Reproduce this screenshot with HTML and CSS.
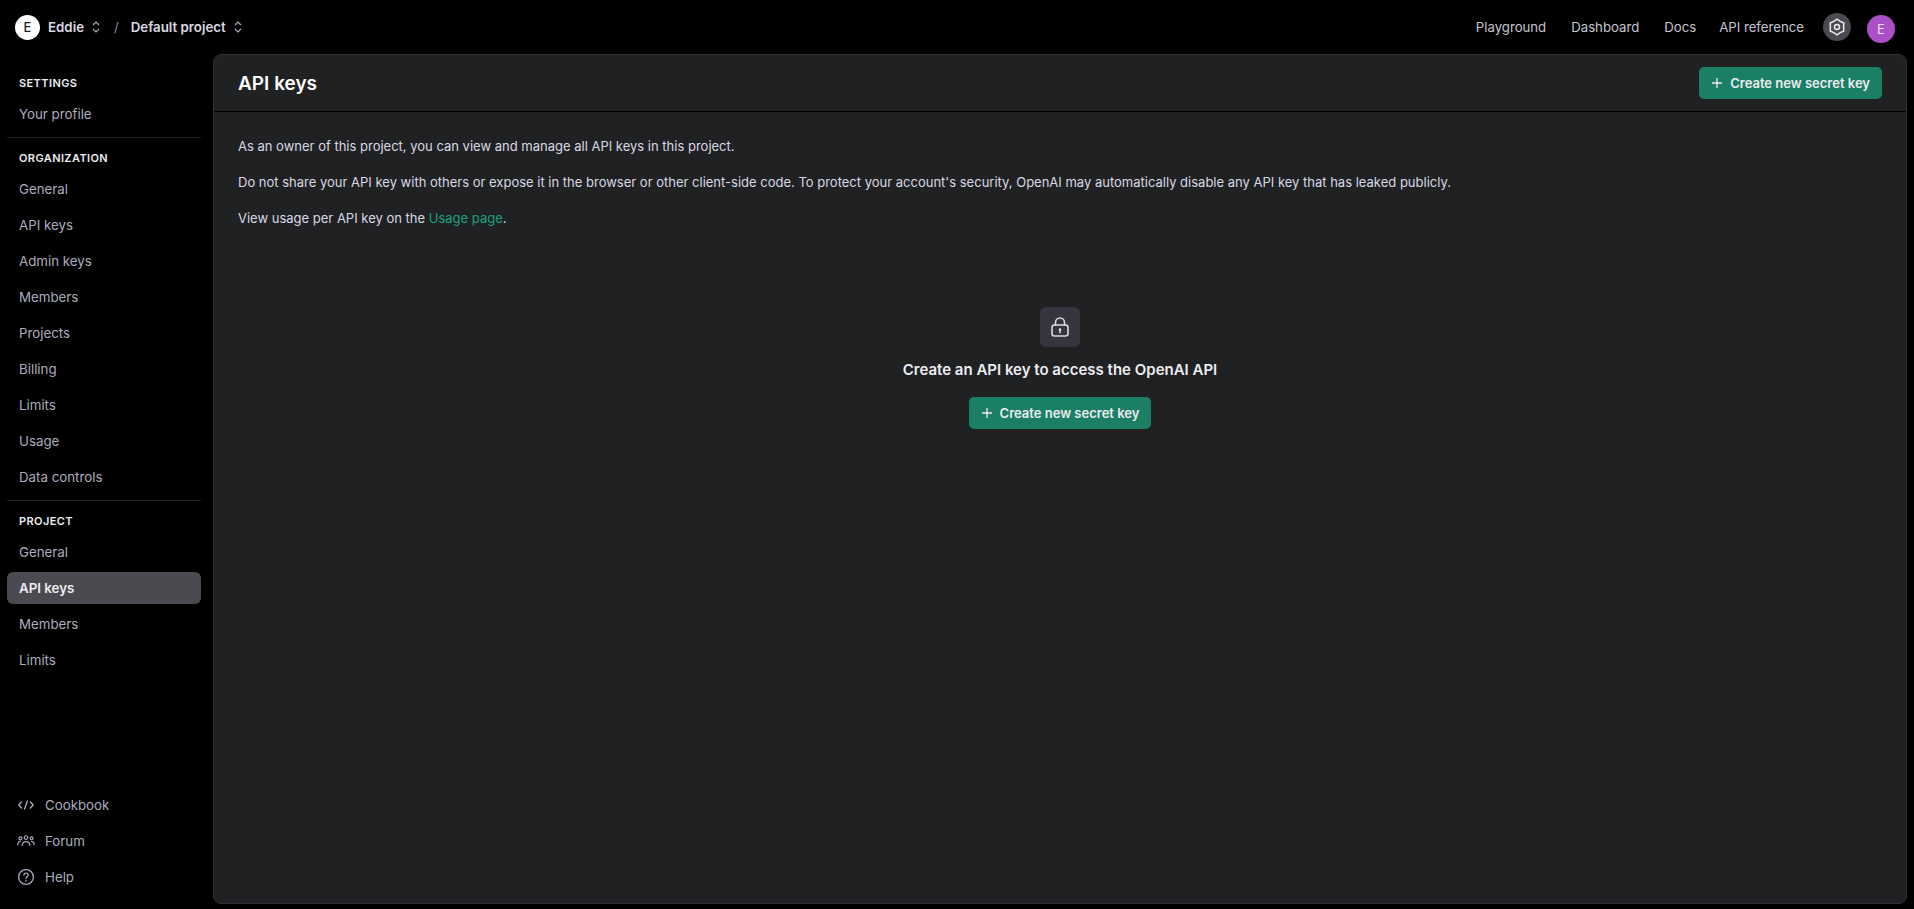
FILE: index.html
```html
<!DOCTYPE html>
<html lang="en">

<head>
  <meta charset="UTF-8">
  <title>API keys</title>
  <link rel="stylesheet" href="styles.css">
</head>

<body>
  <header class="topbar">
    <div class="crumbs">
      <div class="org-avatar">E</div>
      <span class="crumb">Eddie</span>
      <svg class="updown" viewBox="0 0 10 16" width="10" height="16"><path d="M2 6 5 3l3 3M2 10l3 3 3-3" /></svg>
      <span class="slash">/</span>
      <span class="crumb">Default project</span>
      <svg class="updown" viewBox="0 0 10 16" width="10" height="16"><path d="M2 6 5 3l3 3M2 10l3 3 3-3" /></svg>
    </div>
    <nav class="toplinks">
      <a class="toplink">Playground</a>
      <a class="toplink">Dashboard</a>
      <a class="toplink docs">Docs</a>
      <a class="toplink">API reference</a>
      <div class="gear">
        <svg viewBox="0 0 20 20" width="20" height="20"><path d="M10 2.200 13.300 4.300 16.800 6 16.600 10 16.800 14 13.300 15.700 10 17.800 6.700 15.700 3.200 14 3.400 10 3.200 6 6.700 4.300z" /><circle cx="10" cy="10" r="2.500" /></svg>
      </div>
      <div class="user-avatar">E</div>
    </nav>
  </header>

  <div class="layout">
    <aside class="sidebar">
      <div class="side-main">
        <section class="side-group">
          <h4>Settings</h4>
          <a class="side-link">Your profile</a>
        </section>
        <section class="side-group">
          <h4>Organization</h4>
          <a class="side-link">General</a>
          <a class="side-link">API keys</a>
          <a class="side-link">Admin keys</a>
          <a class="side-link">Members</a>
          <a class="side-link">Projects</a>
          <a class="side-link">Billing</a>
          <a class="side-link">Limits</a>
          <a class="side-link">Usage</a>
          <a class="side-link">Data controls</a>
        </section>
        <section class="side-group">
          <h4>Project</h4>
          <a class="side-link">General</a>
          <a class="side-link active">API keys</a>
          <a class="side-link">Members</a>
          <a class="side-link">Limits</a>
        </section>
      </div>
      <div class="side-foot">
        <a class="side-link">
          <svg viewBox="0 0 18 18" width="18" height="18"><path d="M4.500 6 1.800 9l2.700 3M13.500 6l2.700 3-2.700 3M10.400 5 7.600 13" /></svg>
          Cookbook
        </a>
        <a class="side-link">
          <svg viewBox="0 0 20 18" width="20" height="18"><circle cx="10" cy="5.200" r="2" /><circle cx="3.800" cy="6" r="1.600" /><circle cx="16.200" cy="6" r="1.600" /><path d="M5.600 14c.4-2.800 2.200-4.400 4.400-4.400s4 1.600 4.400 4.400M.8 13c.2-2.200 1.300-3.600 3.200-3.700M19.200 13c-.2-2.200-1.300-3.600-3.200-3.700" /></svg>
          Forum
        </a>
        <a class="side-link">
          <svg viewBox="0 0 18 18" width="18" height="18"><circle cx="9" cy="9" r="7.400" /><path d="M6.900 7.200C7 5.900 7.900 5.200 9 5.200c1.200 0 2.100.8 2.100 1.900 0 1.600-2.100 1.700-2.100 3.300M9 12.400v.6" /></svg>
          Help
        </a>
      </div>
    </aside>

    <main class="panel">
      <div class="panel-head">
        <h1>API keys</h1>
        <button class="btn-green">
          <svg viewBox="0 0 12 12" width="12" height="12"><path d="M6 1v10M1 6h10" /></svg>
          Create new secret key
        </button>
      </div>
      <div class="panel-body">
        <p>As an owner of this project, you can view and manage all API keys in this project.</p>
        <p>Do not share your API key with others or expose it in the browser or other client-side code. To protect your account's security, OpenAI may automatically disable any API key that has leaked publicly.</p>
        <p>View usage per API key on the <a class="green-link">Usage page</a>.</p>

        <div class="empty">
          <div class="lock-box">
            <svg viewBox="0 0 20 20" width="20" height="20"><rect x="2" y="8" width="16" height="11" rx="2.400" /><path d="M5.500 8V5.500C5.500 3 7.500 1 10 1s4.500 2 4.500 4.500V8M10 12.600v3" /><circle class="dot" cx="10" cy="12.600" r="1.300" /></svg>
          </div>
          <h3>Create an API key to access the OpenAI API</h3>
          <button class="btn-green">
            <svg viewBox="0 0 12 12" width="12" height="12"><path d="M6 1v10M1 6h10" /></svg>
            Create new secret key
          </button>
        </div>
      </div>
    </main>
  </div>
</body>

</html>
```

FILE: styles.css
```css
* {
  box-sizing: border-box;
}

html,
body {
  height: 100%;
}

body {
  margin: 0;
  background: #000;
  color: #ececf1;
  font-family: Inter, "Liberation Sans", sans-serif;
  font-size: 13px;
  overflow: hidden;
  display: flex;
  flex-direction: column;
}

/* barra de cima */
.topbar {
  height: 54px;
  flex: none;
  display: flex;
  justify-content: space-between;
  align-items: center;
  padding: 0 19px 0 15px;
}

.crumbs {
  display: flex;
  align-items: center;
}

.org-avatar {
  width: 25px;
  height: 25px;
  border-radius: 50%;
  background: #fff;
  color: #222;
  font-size: 13px;
  font-weight: 500;
  display: flex;
  align-items: center;
  justify-content: center;
  margin-right: 8px;
}

.crumb {
  color: #d9d9e3;
  font-size: 13.300px;
  font-weight: 600;
}

.updown {
  margin-left: 7px;
  fill: none;
  stroke: #acacbe;
  stroke-width: 1.2;
}

.slash {
  color: #8e8ea0;
  margin: 0 12px 0 13px;
}

.toplinks {
  display: flex;
  align-items: center;
  color: #c5c5d2;
  font-size: 13.200px;
}

.toplink {
  margin-right: 25px;
}

.toplink.docs {
  margin-right: 23px;
}

.gear {
  width: 28px;
  height: 28px;
  border-radius: 50%;
  background: #4a4a50;
  display: flex;
  align-items: center;
  justify-content: center;
  margin: 0 16px 0 -6px;
}

.gear svg {
  fill: none;
  stroke: #ececf1;
  stroke-width: 1.500;
  stroke-linejoin: round;
}

.user-avatar {
  width: 28px;
  height: 28px;
  border-radius: 50%;
  background: #ab4fc6;
  color: #f0dcf5;
  font-size: 13px;
  display: flex;
  align-items: center;
  justify-content: center;
  margin-top: 3px;
}

/* corpo */
.layout {
  flex: 1;
  display: flex;
  min-height: 0;
  padding: 0 7px 5px 7px;
}

.sidebar {
  width: 194px;
  flex: none;
  margin-right: 12px;
  display: flex;
  flex-direction: column;
  justify-content: space-between;
}

.side-group {
  padding-top: 20px;
  padding-bottom: 7px;
  border-bottom: 1px solid #202123;
}

.side-group:last-child {
  border-bottom: none;
}

.side-group+.side-group {
  padding-top: 11px;
}

.side-group h4 {
  margin: 0 0 6px;
  padding-left: 12px;
  height: 18px;
  line-height: 18px;
  font-size: 11px;
  font-weight: 600;
  letter-spacing: 0.400px;
  text-transform: uppercase;
  color: #ececf1;
}

.side-link {
  height: 32px;
  margin-bottom: 4px;
  padding-left: 12px;
  border-radius: 6px;
  display: flex;
  align-items: center;
  color: #acacbe;
  font-size: 13.300px;
}

.side-link:last-child {
  margin-bottom: 0;
}

.side-link.active {
  background: #4a4a50;
  color: #ececf1;
  font-weight: 600;
}

.side-foot {
  padding-bottom: 11px;
}

.side-foot .side-link {
  padding-left: 10px;
}

.side-foot svg {
  width: 18px;
  margin-right: 10px;
  fill: none;
  stroke: #acacbe;
  stroke-width: 1.300;
  stroke-linecap: round;
  stroke-linejoin: round;
}

/* painel principal */
.panel {
  flex: 1;
  background: #202123;
  border: 1px solid #2f3033;
  border-radius: 8px;
  display: flex;
  flex-direction: column;
}

.panel-head {
  height: 57px;
  flex: none;
  display: flex;
  align-items: center;
  justify-content: space-between;
  padding: 0 24px;
  border-bottom: 1px solid #000;
}

.panel-head h1 {
  margin: 0;
  font-size: 19px;
  font-weight: 600;
  color: #fff;
}

.btn-green {
  height: 32px;
  padding: 0 12px;
  background: #1a7f64;
  color: #ececf1;
  border: none;
  border-radius: 5px;
  font-family: inherit;
  font-size: 13px;
  font-weight: 600;
  display: flex;
  align-items: center;
  gap: 7px;
}

.btn-green svg {
  fill: none;
  stroke: #ececf1;
  stroke-width: 1.300;
}

.panel-body {
  padding: 25px 24px;
}

.panel-body p {
  margin: 0 0 18px;
  height: 18px;
  line-height: 18px;
  color: #d9d9e3;
}

.green-link {
  color: #19a37d;
}

.empty {
  margin-top: 80px;
  display: flex;
  flex-direction: column;
  align-items: center;
}

.lock-box {
  width: 40px;
  height: 40px;
  border-radius: 6px;
  background: #34353f;
  display: flex;
  align-items: center;
  justify-content: center;
}

.lock-box svg {
  fill: none;
  stroke: #d9d9e3;
  stroke-width: 1.600;
  stroke-linecap: round;
}

.lock-box .dot {
  fill: #d9d9e3;
  stroke: none;
}

.empty h3 {
  margin: 13px 0 17px;
  height: 20px;
  line-height: 20px;
  font-size: 15px;
  font-weight: 600;
  color: #ececf1;
}
```
